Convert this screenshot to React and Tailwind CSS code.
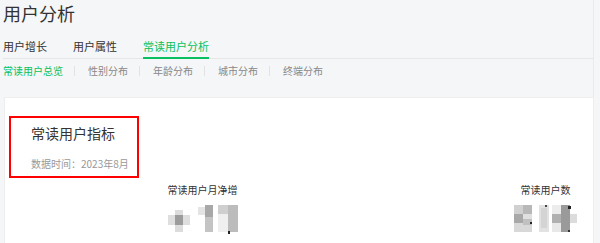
import React from "react";

const tabs = ["用户增长", "用户属性", "常读用户分析"];
const subTabs = ["常读用户总览", "性别分布", "年龄分布", "城市分布", "终端分布"];

// 打码的数字（马赛克）
function MosaicPlus11() {
    return (
        <svg width="70" height="30" viewBox="0 0 70 30">
            <rect x="0" y="10" width="22" height="10" fill="#dedede" />
            <rect x="7" y="5" width="8" height="22" fill="#dcdcdc" />
            <rect x="7" y="10" width="8" height="10" fill="#9c9c9c" />
            <rect x="30" y="2" width="7" height="8" fill="#e4e4e4" />
            <rect x="37" y="0" width="8" height="27" fill="#c4c4c4" />
            <rect x="37" y="0" width="8" height="12" fill="#a8a8a8" />
            <rect x="50" y="0" width="20" height="9" fill="#cfcfcf" />
            <rect x="60" y="0" width="10" height="27" fill="#bcbcbc" />
            <rect x="50" y="9" width="10" height="18" fill="#efefef" />
            <rect x="60" y="26" width="2" height="3" fill="#222" />
        </svg>
    );
}

function Mosaic514() {
    return (
        <svg width="63" height="28" viewBox="0 0 63 28">
            <rect x="0" y="0" width="9" height="9" fill="#d0d0d0" />
            <rect x="9" y="0" width="9" height="9" fill="#b8b8b8" />
            <rect x="0" y="9" width="9" height="9" fill="#a8a8a8" />
            <rect x="9" y="9" width="9" height="9" fill="#e0e0e0" />
            <rect x="0" y="18" width="18" height="9" fill="#d8d8d8" />
            <rect x="9" y="14" width="9" height="6" fill="#c0c0c0" />
            <rect x="16" y="17" width="2" height="2" fill="#222" />
            <rect x="25" y="0" width="10" height="27" fill="#e2e2e2" />
            <rect x="27" y="3" width="6" height="20" fill="#d4d4d4" />
            <rect x="31" y="0" width="2" height="2" fill="#444" />
            <rect x="38" y="0" width="9" height="9" fill="#ececec" />
            <rect x="38" y="9" width="9" height="9" fill="#b0b0b0" />
            <rect x="38" y="18" width="9" height="9" fill="#e8e8e8" />
            <rect x="47" y="0" width="9" height="27" fill="#9a9a9a" />
            <rect x="56" y="9" width="7" height="9" fill="#dcdcdc" />
            <rect x="54" y="1" width="3" height="3" fill="#222" />
            <rect x="54" y="25" width="2" height="2" fill="#333" />
        </svg>
    );
}

export default function App() {
    return (
        <div
            className="w-[600px] h-[243px] overflow-hidden bg-[#f5f6f7]"
            style={{ fontFamily: '"Noto Sans CJK SC", "Noto Sans", sans-serif' }}
        >
            <div className="w-[594px] h-full border-r border-[#ebebeb] pl-[3px]">
                {/* 标题 */}
                <div className="text-[18px] leading-[26px] text-[#333]">用户分析</div>

                {/* 主标签 */}
                <div className="mt-[12px] flex border-b border-[#e6e6e6] -mr-px">
                    {tabs.map((t, i) => (
                        <div
                            key={t}
                            className={
                                i === 2
                                    ? "text-[11px] leading-[16px] pb-[3px] -mb-px border-b-2 border-[#07c160] text-[#07c160]"
                                    : "text-[11px] leading-[16px] pb-[3px] -mb-px border-b-2 border-transparent text-[#333] mr-[26px]"
                            }
                        >
                            {t}
                        </div>
                    ))}
                </div>

                {/* 子标签 */}
                <div className="mt-[5px] flex items-center">
                    {subTabs.map((t, i) => (
                        <React.Fragment key={t}>
                            <span
                                className={
                                    i === 0
                                        ? "text-[10px] leading-[14px] text-[#07c160]"
                                        : "text-[10px] leading-[14px] text-[#888]"
                                }
                            >
                                {t}
                            </span>
                            {i < subTabs.length - 1 && (
                                <span className="ml-[10.5px] mr-[13.5px] w-px h-[10px] bg-[#e3e3e3]" />
                            )}
                        </React.Fragment>
                    ))}
                </div>

                {/* 卡片 */}
                <div className="mt-[19px] ml-px mr-[-1px] bg-white border border-[#eeeeee] h-[200px] pl-[4px] pt-[18px]">
                    <div className="w-[130px] h-[62px] border-2 border-[#ff0000] pl-[20px] pt-[5px]">
                        <div className="text-[14px] leading-[20px] text-[#333]">常读用户指标</div>
                        <div className="mt-[14px] text-[10px] leading-[14px] text-[#999] whitespace-nowrap">
                            数据时间：2023年8月
                        </div>
                    </div>

                    <div className="mt-[5px] flex">
                        <div className="ml-[153.5px] w-[80px] shrink-0 flex flex-col items-center">
                            <div className="text-[10px] leading-[14px] text-[#333] whitespace-nowrap">常读用户月净增</div>
                            <div className="mt-[8px]">
                                <MosaicPlus11 />
                            </div>
                        </div>
                        <div className="ml-[263px] w-[80px] shrink-0 flex flex-col items-center">
                            <div className="text-[10px] leading-[14px] text-[#333] whitespace-nowrap">常读用户数</div>
                            <div className="mt-[8px]">
                                <Mosaic514 />
                            </div>
                        </div>
                    </div>
                </div>
            </div>
        </div>
    );
}
